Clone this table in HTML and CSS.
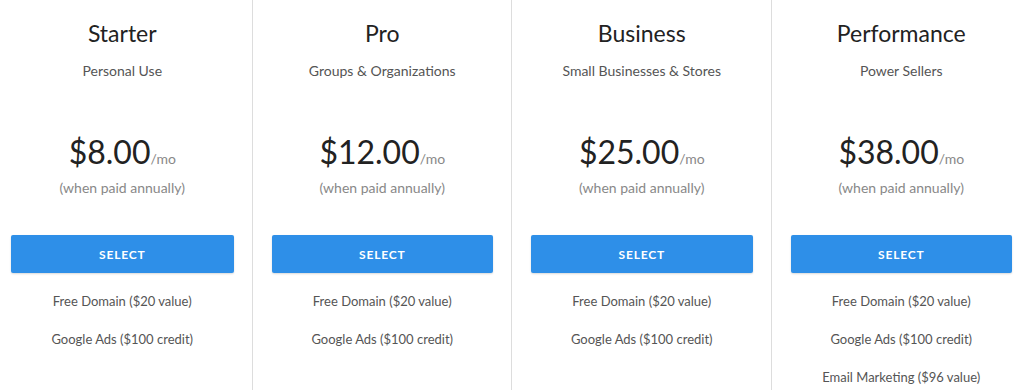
FILE: index.html
```html
<!DOCTYPE html>
<html>
<head>
<meta charset="utf-8">
<link rel="stylesheet" href="styles.css">
</head>
<body>
<div class="plans">
  <div class="plan">
    <h2 class="name">Starter</h2>
    <p class="desc">Personal Use</p>
    <div class="price"><span class="amount">$8.00</span><span class="per">/mo</span></div>
    <p class="note">(when paid annually)</p>
    <button class="select">SELECT</button>
    <ul class="features">
      <li>Free Domain ($20 value)</li>
      <li>Google Ads ($100 credit)</li>
    </ul>
  </div>
  <div class="plan">
    <h2 class="name">Pro</h2>
    <p class="desc">Groups &amp; Organizations</p>
    <div class="price"><span class="amount">$12.00</span><span class="per">/mo</span></div>
    <p class="note">(when paid annually)</p>
    <button class="select">SELECT</button>
    <ul class="features">
      <li>Free Domain ($20 value)</li>
      <li>Google Ads ($100 credit)</li>
    </ul>
  </div>
  <div class="plan">
    <h2 class="name">Business</h2>
    <p class="desc">Small Businesses &amp; Stores</p>
    <div class="price"><span class="amount">$25.00</span><span class="per">/mo</span></div>
    <p class="note">(when paid annually)</p>
    <button class="select">SELECT</button>
    <ul class="features">
      <li>Free Domain ($20 value)</li>
      <li>Google Ads ($100 credit)</li>
    </ul>
  </div>
  <div class="plan">
    <h2 class="name">Performance</h2>
    <p class="desc">Power Sellers</p>
    <div class="price"><span class="amount">$38.00</span><span class="per">/mo</span></div>
    <p class="note">(when paid annually)</p>
    <button class="select">SELECT</button>
    <ul class="features">
      <li>Free Domain ($20 value)</li>
      <li>Google Ads ($100 credit)</li>
      <li>Email Marketing ($96 value)</li>
    </ul>
  </div>
</div>
</body>
</html>
```
FILE: styles.css
```css
html, body {
  margin: 0;
  padding: 0;
  background: #fff;
  overflow: hidden;
}
body {
  font-family: Lato, "Open Sans", sans-serif;
  color: #333;
}
.plans {
  display: grid;
  grid-template-columns: repeat(4, 259.5px);
  margin-left: -8px;
  width: 1038px;
  height: 390px;
}
.plan {
  display: flex;
  flex-direction: column;
  align-items: center;
  padding: 0 18px 0 19px;
  border-left: 1px solid #ddd;
}
.plan:first-child {
  border-left: none;
}
.name {
  margin: 20px 0 0;
  font-size: 23px;
  font-weight: 400;
  line-height: 26px;
  color: #222;
}
.desc {
  margin: 16px 0 0;
  font-size: 14px;
  line-height: 18px;
  color: #555;
}
.price {
  margin-top: 52px;
  display: flex;
  align-items: baseline;
}
.amount {
  font-size: 32px;
  line-height: 40px;
  color: #222;
}
.per {
  font-size: 14px;
  color: #888;
}
.note {
  margin: 7px 0 0;
  font-size: 14px;
  line-height: 18px;
  color: #888;
}
.select {
  margin-top: 38px;
  width: 100%;
  height: 38px;
  border: none;
  border-radius: 2px;
  background: #2e8fe8;
  color: #fff;
  font-family: Lato, sans-serif;
  font-weight: 700;
  font-size: 12px;
  letter-spacing: 0.8px;
  box-shadow: 0 1px 2px rgba(0,0,0,0.15);
}
.features {
  list-style: none;
  margin: 9px 0 0;
  padding: 0;
  text-align: center;
}
.features li {
  font-size: 13px;
  line-height: 38px;
  color: #555;
}
```
